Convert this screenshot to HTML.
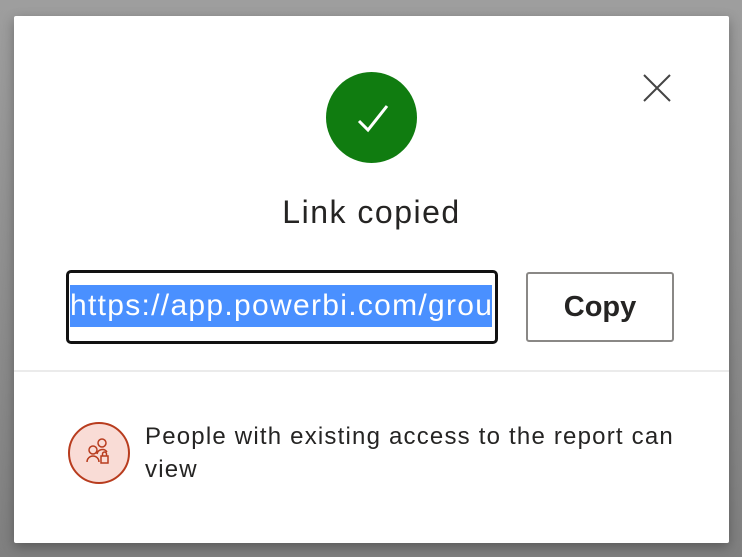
<!DOCTYPE html>
<html><head><style>
html,body{margin:0;padding:0;width:742px;height:557px;overflow:hidden;font-family:"Liberation Sans",sans-serif;}
body{background:linear-gradient(#9e9e9e,#7f7f7f);position:relative;}
.dlg{position:absolute;left:14px;top:16px;width:715px;height:527px;background:#fff;border-radius:2px;box-shadow:0 4px 12px rgba(0,0,0,.3);}
.abs{position:absolute;}
</style></head><body>
<div class="dlg">
  <svg class="abs" style="left:629px;top:58px" width="28" height="28" viewBox="0 0 28 28"><path d="M1 1L27 27M27 1L1 27" stroke="#444" stroke-width="2" fill="none"/></svg>
  <div class="abs" style="left:312px;top:56px;width:91px;height:91px;border-radius:50%;background:#107c10;"></div>
  <svg class="abs" style="left:312px;top:56px" width="91" height="91" viewBox="0 0 91 91"><path d="M33 49L42 58L61 34" stroke="#fff" stroke-width="3" fill="none"/></svg>
  <div class="abs" style="left:0;width:715px;top:178px;text-align:center;font-size:32px;letter-spacing:1.5px;color:#252423;">Link copied</div>
  <div class="abs" style="left:52px;top:254px;width:426px;height:68px;border:3px solid #111;border-radius:5px;"></div>
  <div class="abs" style="left:56px;top:269px;width:422px;height:42px;background:#4a90ff;color:#fff;font-size:30px;letter-spacing:1.3px;line-height:42px;white-space:nowrap;overflow:hidden;">https://app.powerbi.com/grou</div>
  <div class="abs" style="left:512px;top:256px;width:144px;height:66px;border:2px solid #8a8886;border-radius:3px;text-align:center;line-height:66px;font-size:29px;font-weight:bold;color:#252423;">Copy</div>
  <div class="abs" style="left:0;top:354px;width:715px;height:2px;background:#ebebeb;"></div>
  <div class="abs" style="left:54px;top:406px;width:58px;height:58px;border:2px solid #b83c1e;border-radius:50%;background:#f9dcd6;"></div>
  <svg class="abs" style="left:56px;top:408px" width="58" height="58" viewBox="0 0 58 58">
    <g stroke="#b83c1e" stroke-width="1.5" fill="none">
      <circle cx="32" cy="19" r="4"/><path d="M27 30a5.5 5.5 0 0 1 10-2"/>
      <circle cx="23" cy="26" r="4"/><path d="M17 38a6 6 0 0 1 12 0"/>
      <rect x="31" y="32" width="7" height="7"/><path d="M32.5 32v-2a2 2 0 0 1 4 0v2"/></g></svg>
  <div class="abs" style="left:131px;top:404px;width:545px;font-size:24px;letter-spacing:1.2px;line-height:33px;color:#252423;">People with existing access to the report can view</div>
</div>
</body></html>
